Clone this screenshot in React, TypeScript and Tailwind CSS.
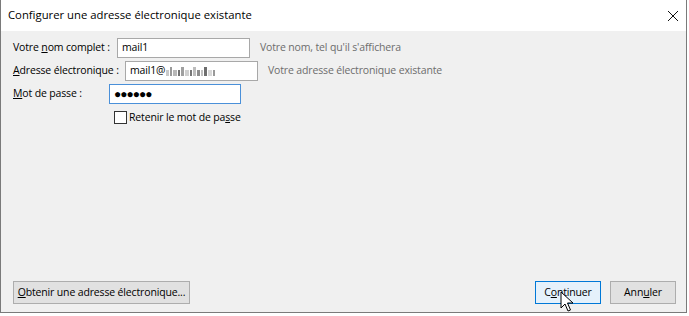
import React from "react";

const font = { fontFamily: '"Segoe UI", "Open Sans", "Noto Sans", sans-serif' };

function Field({
  label,
  labelW,
  inputW,
  value,
  hint,
  focused,
  password,
}: {
  label: React.ReactNode;
  labelW: string;
  inputW: string;
  value?: React.ReactNode;
  hint?: string;
  focused?: boolean;
  password?: boolean;
}) {
  return (
    <div className="flex items-center h-[20px] whitespace-nowrap">
      <div className={`${labelW} shrink-0 text-[10.5px] tracking-[-0.15px] text-black`}>{label}</div>
      <div
        className={`${inputW} h-[20px] shrink-0 bg-white flex items-center px-[4px] text-[10.5px] tracking-[-0.15px] text-black border ${
          focused ? "border-[#4a90d9]" : "border-[#a8a8a8]"
        }`}
      >
        {password ? <span className="tracking-[-1px] text-[12px]">●●●●●●</span> : value}
      </div>
      {hint && <div className="ml-[10px] text-[10.5px] tracking-[-0.15px] text-[#6d6d6d]">{hint}</div>}
    </div>
  );
}

function Blur() {
  // obfuscated domain part of the address
  const blocks = ["w-[3px] bg-[#c9c9c9]", "w-[2px] bg-[#9a9a9a]", "w-[4px] bg-[#b8b8b8]", "w-[2px] bg-[#707070]", "w-[3px] bg-[#a0a0a0]", "w-[4px] bg-[#d0d0d0]", "w-[2px] bg-[#777]", "w-[3px] bg-[#bcbcbc]", "w-[3px] bg-[#8c8c8c]", "w-[2px] bg-[#c0c0c0]", "w-[3px] bg-[#6e6e6e]", "w-[4px] bg-[#d8d8d8]", "w-[2px] bg-[#999]"];
  return (
    <span className="inline-flex items-end gap-[1px] h-[9px] ml-[1px]">
      {blocks.map((b, i) => (
        <span key={i} className={`${b} ${i % 3 === 1 ? "h-[9px]" : "h-[6px]"}`} />
      ))}
    </span>
  );
}

export default function App() {
  return (
    <div className="w-[689px] h-[316px] bg-white overflow-hidden relative whitespace-nowrap" style={font}>
      <div className="w-[687px] h-[313px] flex flex-col border-l border-r border-b border-[#7a7a7a]">
        {/* Title bar */}
        <div className="h-[31px] shrink-0 bg-white flex items-center justify-between pl-[7px] pr-[6px]">
          <span className="text-[11.3px] text-black">Configurer une adresse électronique existante</span>
          <svg width="12" height="12" viewBox="0 0 12 12" className="mr-[1px]">
            <path d="M1 1 L11 11 M11 1 L1 11" stroke="#111" strokeWidth="1" />
          </svg>
        </div>

        {/* Content */}
        <div className="flex-1 bg-[#f0f0f0] flex flex-col pl-[12px] pt-[7px] pb-[8px] pr-[10px]">
          <div className="flex flex-col gap-[3px]">
            <Field
              label={<>Votre <u>n</u>om complet :</>}
              labelW="w-[104px]"
              inputW="w-[133px]"
              value="mail1"
              hint="Votre nom, tel qu'il s'affichera"
            />
            <Field
              label={<><u>A</u>dresse électronique :</>}
              labelW="w-[112px]"
              inputW="w-[133px]"
              value={<span className="flex items-center">mail1@<Blur /></span>}
              hint="Votre adresse électronique existante"
            />
            <Field label={<><u>M</u>ot de passe :</>} labelW="w-[96px]" inputW="w-[132px]" password focused />
          </div>
          <div className="flex items-center mt-[6px] ml-[101px] gap-[1px]">
            <span className="w-[13px] h-[13px] border border-[#333] bg-white" />
            <span className="text-[10.5px] tracking-[-0.15px] text-black ml-[1px]">Retenir le mot de pa<u>s</u>se</span>
          </div>

          <div className="flex-1" />

          <div className="flex items-center text-[10.5px] tracking-[-0.15px]">
            <button className="h-[23px] w-[177px] bg-[#e1e1e1] border border-[#adadad] text-black text-center">
              <u>O</u>btenir une adresse électronique...
            </button>
            <div className="flex-1" />
            <button className="h-[23px] w-[66px] bg-[#e5f1fb] border border-[#0078d7] text-black text-center">
              C<u>o</u>ntinuer
            </button>
            <button className="h-[23px] w-[66px] ml-[9px] mr-[0px] bg-[#e1e1e1] border border-[#adadad] text-black text-center">
              Ann<u>u</u>ler
            </button>
          </div>
        </div>
      </div>

      {/* mouse pointer over Continuer */}
      <svg className="absolute left-[560px] top-[291px]" width="14" height="22" viewBox="0 0 14 22">
        <path
          d="M1 1 L1 17 L5 13 L8 20 L10.5 19 L7.5 12 L13 12 Z"
          fill="#fff"
          stroke="#000"
          strokeWidth="1"
          strokeLinejoin="miter"
        />
      </svg>
    </div>
  );
}
